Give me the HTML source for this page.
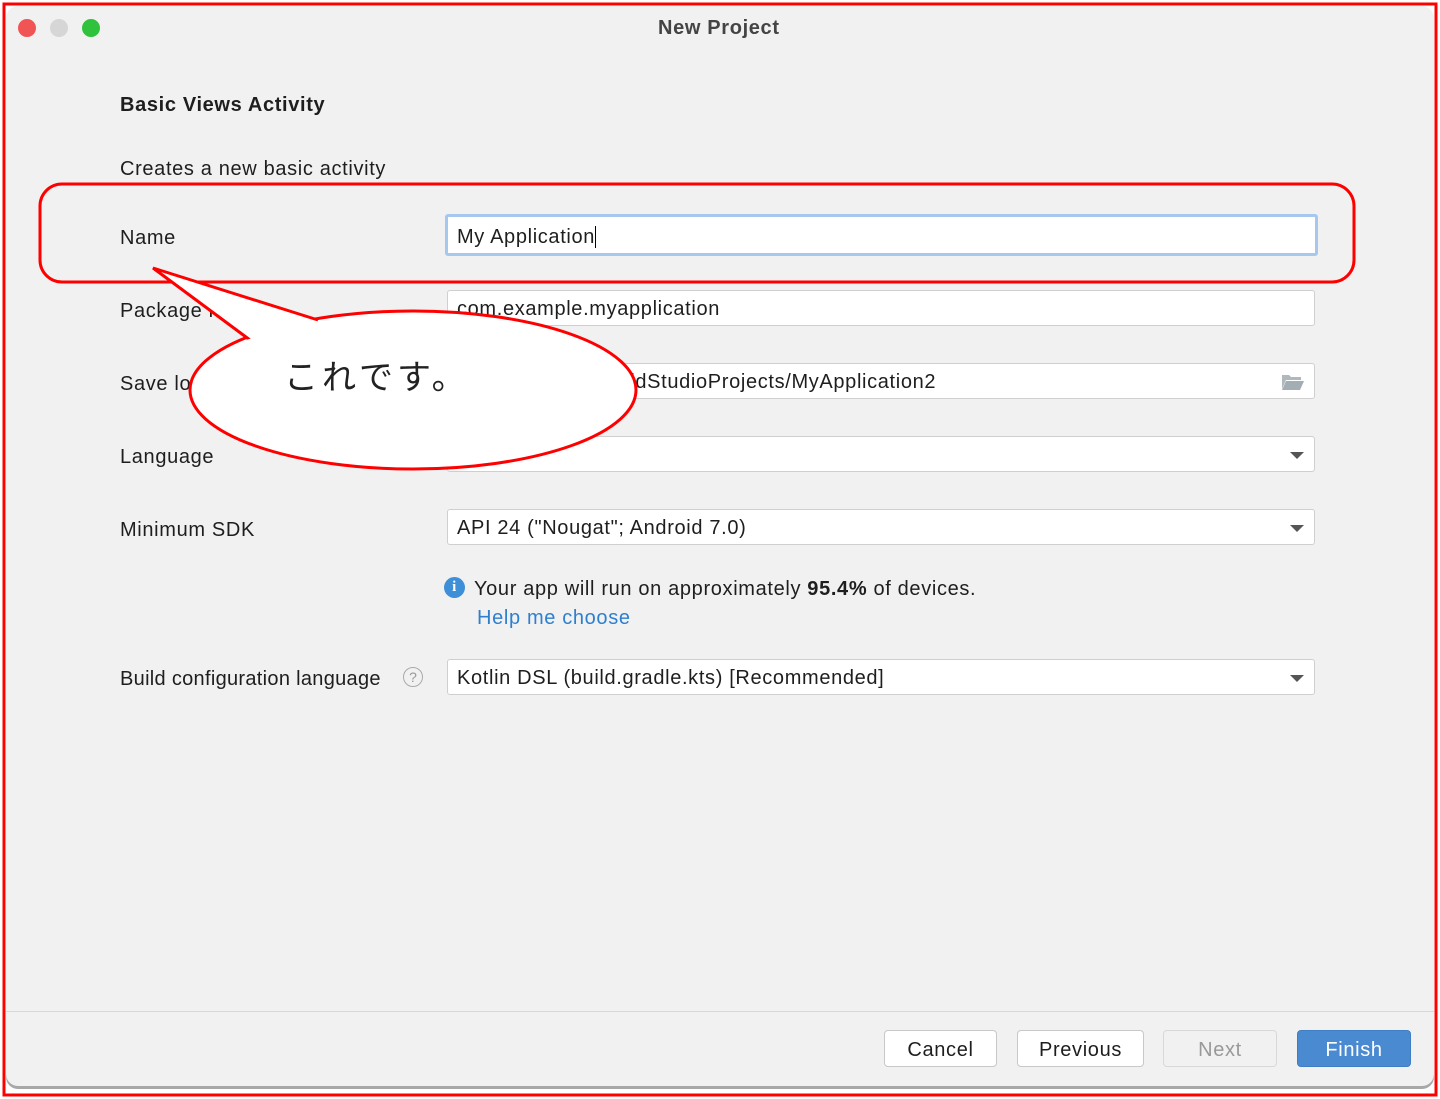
<!DOCTYPE html>
<html><head><meta charset="utf-8"><style>
body{margin:0;width:1440px;height:1099px;background:#fff;font-family:"Liberation Sans","Noto Sans CJK JP",sans-serif;position:relative;overflow:hidden;letter-spacing:0.65px}
.win{position:absolute;left:6px;top:6px;width:1428px;height:1080px;background:#f1f1f1;border-radius:12px;box-shadow:0 3px 0 #a8a8a8}
.t{position:absolute;font-size:20px;color:#1e1e1e;white-space:nowrap}
.f{position:absolute;left:447px;width:868px;height:36px;background:#fff;border:1px solid #cfcfcf;border-radius:3px;box-sizing:border-box}
.f span{position:absolute;left:9px;top:7px;font-size:20px;color:#1e1e1e;white-space:nowrap}
.arr{position:absolute;right:10px;top:15px;width:0;height:0;border-left:7px solid transparent;border-right:7px solid transparent;border-top:7px solid #555}
.b{position:absolute;top:1030px;height:37px;border:1px solid #c8c8c8;border-radius:4px;background:#fff;font-size:20px;text-align:center;line-height:38px;box-sizing:border-box;color:#1e1e1e}
.dot{position:absolute;top:19px;width:18px;height:18px;border-radius:50%}
</style></head><body>
<div class="win"></div>
<div class="dot" style="left:18px;background:#f05454"></div>
<div class="dot" style="left:50px;background:#d6d6d6"></div>
<div class="dot" style="left:82px;background:#2ec23d"></div>
<div class="t" style="left:658px;top:17px;color:#444;font-weight:bold;font-size:20px">New Project</div>
<div class="t" style="left:120px;top:94px;font-weight:bold">Basic Views Activity</div>
<div class="t" style="left:120px;top:158px">Creates a new basic activity</div>
<div class="t" style="left:120px;top:227px">Name</div>
<div class="f" style="left:445px;top:214px;width:873px;height:42px;border:3px solid #a6c8ef"><span style="top:9px">My Application<span style="position:static;border-right:1.5px solid #000"></span></span></div>
<div class="t" style="left:120px;top:300px">Package name</div>
<div class="f" style="top:290px"><span>com.example.myapplication</span></div>
<div class="t" style="left:120px;top:373px">Save location</div>
<div class="f" style="top:363px"><span>/Users/xxxx/AndroidStudioProjects/MyApplication2</span>
<svg style="position:absolute;right:9px;top:9px" width="24" height="18" viewBox="0 0 24 18"><path d="M1 2h7l2 2h10v3H5L1 16z" fill="#b0b8be"/><path d="M5 8h18l-4 9H1z" fill="#a3adb4"/></svg></div>
<div class="t" style="left:120px;top:446px">Language</div>
<div class="f" style="top:436px"><span>Kotlin</span><div class="arr"></div></div>
<div class="t" style="left:120px;top:519px">Minimum SDK</div>
<div class="f" style="top:509px"><span>API 24 ("Nougat"; Android 7.0)</span><div class="arr"></div></div>
<div style="position:absolute;left:444px;top:577px;width:21px;height:21px;border-radius:50%;background:#3d8fd8;color:#fff;font-weight:bold;font-size:15px;text-align:center;line-height:21px;font-family:'Liberation Serif',serif">i</div>
<div class="t" style="left:474px;top:578px">Your app will run on approximately <b>95.4%</b> of devices.</div>
<div class="t" style="left:477px;top:607px;color:#2f7fcf">Help me choose</div>
<div class="t" style="left:120px;top:668px;letter-spacing:0.3px">Build configuration language</div>
<div style="position:absolute;left:403px;top:667px;width:18px;height:18px;border:1px solid #aaa;border-radius:50%;color:#999;font-size:14px;text-align:center;line-height:18px;letter-spacing:0">?</div>
<div class="f" style="top:659px"><span>Kotlin DSL (build.gradle.kts) [Recommended]</span><div class="arr"></div></div>
<div style="position:absolute;left:6px;top:1011px;width:1428px;border-top:1px solid #d8d8d8"></div>
<div class="b" style="left:884px;width:113px">Cancel</div>
<div class="b" style="left:1017px;width:127px">Previous</div>
<div class="b" style="left:1163px;width:114px;background:#f1f1f1;color:#999;border-color:#d8d8d8">Next</div>
<div class="b" style="left:1297px;width:114px;background:#4a8ad0;color:#fff;border-color:#3f7dc4">Finish</div>
<svg style="position:absolute;left:0;top:0" width="1440" height="1099">
<rect x="4" y="4" width="1432" height="1091" fill="none" stroke="#f00" stroke-width="3"/>
<rect x="40" y="184" width="1314" height="98" rx="22" fill="none" stroke="#f00" stroke-width="3"/>
<ellipse cx="413" cy="390" rx="223" ry="79" fill="#fff" stroke="#f00" stroke-width="3"/>
<path d="M250 340 L153 268 L318 320" fill="#fff" stroke="#f00" stroke-width="3"/>
<path d="M246 343 L318 324" stroke="#fff" stroke-width="6"/>
<text x="284" y="389" font-size="34" letter-spacing="4" font-family="Noto Sans CJK JP,sans-serif" fill="#222">これです。</text>
</svg>
</body></html>
